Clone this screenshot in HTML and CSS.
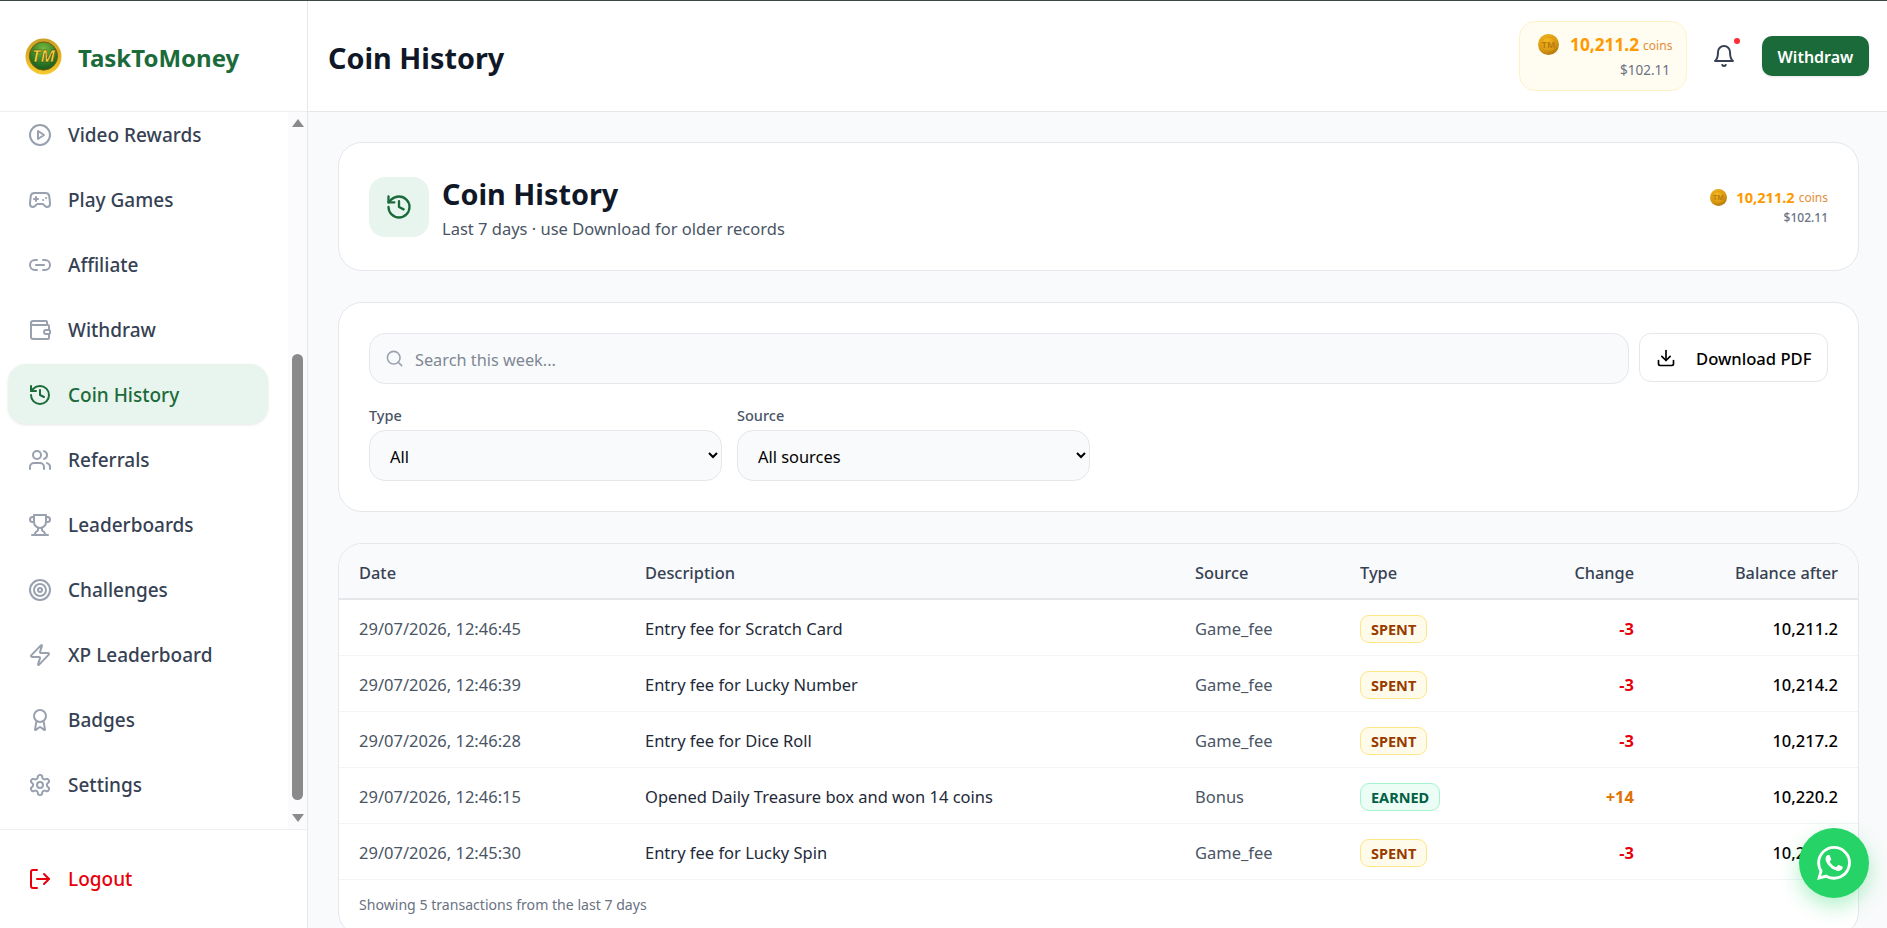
FILE: index.html
```html
<!DOCTYPE html>
<html lang="en">
<head>
    <meta charset="UTF-8">
    <meta name="viewport" content="width=device-width, initial-scale=1.0">
    <title>TaskToMoney - Coin History</title>
    <link rel="stylesheet" href="styles.css">
</head>
<body>
    <svg class="defs" width="0" height="0">
        <defs>
            <radialGradient id="coinFill" cx="40%" cy="30%" r="75%">
                <stop offset="0" stop-color="#f5b81f"/>
                <stop offset="0.65" stop-color="#dc9a12"/>
                <stop offset="1" stop-color="#a9700c"/>
            </radialGradient>
            <linearGradient id="logoRing" x1="0" y1="0" x2="0" y2="1">
                <stop offset="0" stop-color="#c9a227"/>
                <stop offset="0.45" stop-color="#e0ae1f"/>
                <stop offset="1" stop-color="#f5cb2e"/>
            </linearGradient>
            <radialGradient id="logoCore" cx="50%" cy="25%" r="80%">
                <stop offset="0" stop-color="#78ba3e"/>
                <stop offset="0.6" stop-color="#2f7d28"/>
                <stop offset="1" stop-color="#14501c"/>
            </radialGradient>
            <symbol id="coin" viewBox="0 0 24 24">
                <circle cx="12" cy="12" r="12" fill="url(#coinFill)"/>
                <circle cx="12" cy="12" r="8.5" fill="none" stroke="#b77c0e" stroke-width="0.7" opacity="0.5"/>
                <text x="12" y="15.5" text-anchor="middle" font-family="Noto Sans, sans-serif" font-size="10" font-weight="700" fill="#b77c0e">TM</text>
            </symbol>
            <symbol id="history" viewBox="0 0 24 24">
                <path d="M3 12a9 9 0 1 0 9-9 9.75 9.75 0 0 0-6.74 2.74L3 8"/>
                <path d="M3 3v5h5"/>
                <path d="M12 7v5l4 2"/>
            </symbol>
        </defs>
    </svg>

    <div class="app">
        <aside class="sidebar">
            <div class="brand">
                <svg class="brand-logo" viewBox="0 0 38 38">
                    <circle cx="19" cy="19" r="18.5" fill="url(#logoRing)"/>
                    <circle cx="19" cy="18.5" r="14.5" fill="url(#logoCore)" stroke="#7a5a10" stroke-width="1"/>
                    <text x="19" y="24.5" text-anchor="middle" font-family="Noto Sans, sans-serif" font-size="17" font-weight="700" font-style="italic" fill="#f6d13a" stroke="#3a2c05" stroke-width="0.4">TM</text>
                </svg>
                <span class="brand-name">TaskToMoney</span>
            </div>

            <div class="nav-wrap">
                <nav class="nav">
                    <a class="nav-item" href="#">
                        <svg class="icon" viewBox="0 0 24 24"><circle cx="12" cy="12" r="10"/><polygon points="10 8 16 12 10 16 10 8"/></svg>
                        Video Rewards
                    </a>
                    <a class="nav-item" href="#">
                        <svg class="icon" viewBox="0 0 24 24"><line x1="6" x2="10" y1="11" y2="11"/><line x1="8" x2="8" y1="9" y2="13"/><line x1="15" x2="15.01" y1="12" y2="12"/><line x1="18" x2="18.01" y1="10" y2="10"/><path d="M17.32 5H6.68a4 4 0 0 0-3.978 3.59c-.006.052-.01.101-.017.152C2.604 9.416 2 14.456 2 16a3 3 0 0 0 3 3c1 0 1.5-.5 2-1l1.414-1.414A2 2 0 0 1 9.828 16h4.344a2 2 0 0 1 1.414.586L17 18c.5.5 1 1 2 1a3 3 0 0 0 3-3c0-1.545-.604-6.584-.685-7.258-.007-.05-.011-.1-.017-.151A4 4 0 0 0 17.32 5z"/></svg>
                        Play Games
                    </a>
                    <a class="nav-item" href="#">
                        <svg class="icon" viewBox="0 0 24 24"><path d="M9 17H7A5 5 0 0 1 7 7h2"/><path d="M15 7h2a5 5 0 1 1 0 10h-2"/><line x1="8" x2="16" y1="12" y2="12"/></svg>
                        Affiliate
                    </a>
                    <a class="nav-item" href="#">
                        <svg class="icon" viewBox="0 0 24 24"><path d="M19 7V4a1 1 0 0 0-1-1H5a2 2 0 0 0 0 4h15a1 1 0 0 1 1 1v4h-3a2 2 0 0 0 0 4h3a1 1 0 0 0 1-1v-2a1 1 0 0 0-1-1"/><path d="M3 5v14a2 2 0 0 0 2 2h15a1 1 0 0 0 1-1v-4"/></svg>
                        Withdraw
                    </a>
                    <a class="nav-item active" href="#">
                        <svg class="icon" viewBox="0 0 24 24"><use href="#history"/></svg>
                        Coin History
                    </a>
                    <a class="nav-item" href="#">
                        <svg class="icon" viewBox="0 0 24 24"><path d="M16 21v-2a4 4 0 0 0-4-4H6a4 4 0 0 0-4 4v2"/><circle cx="9" cy="7" r="4"/><path d="M22 21v-2a4 4 0 0 0-3-3.87"/><path d="M16 3.13a4 4 0 0 1 0 7.75"/></svg>
                        Referrals
                    </a>
                    <a class="nav-item" href="#">
                        <svg class="icon" viewBox="0 0 24 24"><path d="M6 9H4.5a2.5 2.5 0 0 1 0-5H6"/><path d="M18 9h1.5a2.5 2.5 0 0 0 0-5H18"/><path d="M4 22h16"/><path d="M10 14.66V17c0 .55-.47.98-.97 1.21C7.85 18.75 7 20.24 7 22"/><path d="M14 14.66V17c0 .55.47.98.97 1.21C16.15 18.75 17 20.24 17 22"/><path d="M18 2H6v7a6 6 0 0 0 12 0V2Z"/></svg>
                        Leaderboards
                    </a>
                    <a class="nav-item" href="#">
                        <svg class="icon" viewBox="0 0 24 24"><circle cx="12" cy="12" r="10"/><circle cx="12" cy="12" r="6"/><circle cx="12" cy="12" r="2"/></svg>
                        Challenges
                    </a>
                    <a class="nav-item" href="#">
                        <svg class="icon" viewBox="0 0 24 24"><path d="M4 14a1 1 0 0 1-.78-1.63l9.9-10.2a.5.5 0 0 1 .86.46l-1.92 6.02A1 1 0 0 0 13 10h7a1 1 0 0 1 .78 1.63l-9.9 10.2a.5.5 0 0 1-.86-.46l1.92-6.02A1 1 0 0 0 11 14z"/></svg>
                        XP Leaderboard
                    </a>
                    <a class="nav-item" href="#">
                        <svg class="icon" viewBox="0 0 24 24"><path d="m15.477 12.89 1.515 8.526a.5.5 0 0 1-.81.47l-3.58-2.687a1 1 0 0 0-1.197 0l-3.586 2.686a.5.5 0 0 1-.81-.469l1.514-8.526"/><circle cx="12" cy="8" r="6"/></svg>
                        Badges
                    </a>
                    <a class="nav-item" href="#">
                        <svg class="icon" viewBox="0 0 24 24"><path d="M12.22 2h-.44a2 2 0 0 0-2 2v.18a2 2 0 0 1-1 1.73l-.43.25a2 2 0 0 1-2 0l-.15-.08a2 2 0 0 0-2.73.73l-.22.38a2 2 0 0 0 .73 2.73l.15.1a2 2 0 0 1 1 1.72v.51a2 2 0 0 1-1 1.74l-.15.09a2 2 0 0 0-.73 2.73l.22.38a2 2 0 0 0 2.73.73l.15-.08a2 2 0 0 1 2 0l.43.25a2 2 0 0 1 1 1.73V20a2 2 0 0 0 2 2h.44a2 2 0 0 0 2-2v-.18a2 2 0 0 1 1-1.73l.43-.25a2 2 0 0 1 2 0l.15.08a2 2 0 0 0 2.73-.73l.22-.39a2 2 0 0 0-.73-2.73l-.15-.08a2 2 0 0 1-1-1.74v-.5a2 2 0 0 1 1-1.74l.15-.09a2 2 0 0 0 .73-2.73l-.22-.38a2 2 0 0 0-2.73-.73l-.15.08a2 2 0 0 1-2 0l-.43-.25a2 2 0 0 1-1-1.73V4a2 2 0 0 0-2-2z"/><circle cx="12" cy="12" r="3"/></svg>
                        Settings
                    </a>
                </nav>
                <div class="scrollbar">
                    <span class="scroll-up"></span>
                    <span class="scroll-thumb"></span>
                    <span class="scroll-down"></span>
                </div>
            </div>

            <div class="sidebar-foot">
                <a class="nav-item logout" href="#">
                    <svg class="icon" viewBox="0 0 24 24"><path d="M9 21H5a2 2 0 0 1-2-2V5a2 2 0 0 1 2-2h4"/><path d="m16 17 5-5-5-5"/><path d="M21 12H9"/></svg>
                    Logout
                </a>
            </div>
        </aside>

        <div class="main">
            <header class="topbar">
                <h1 class="topbar-title">Coin History</h1>
                <div class="topbar-right">
                    <div class="balance-pill">
                        <div class="balance-line">
                            <svg class="coin"><use href="#coin"/></svg>
                            <span class="balance-num">10,211.2</span>
                            <span class="balance-unit">coins</span>
                        </div>
                        <div class="balance-usd">$102.11</div>
                    </div>
                    <button class="bell" type="button">
                        <svg class="bell-icon" viewBox="0 0 24 24"><path d="M6 8a6 6 0 0 1 12 0c0 7 3 9 3 9H3s3-2 3-9"/><path d="M10.3 21a1.94 1.94 0 0 0 3.4 0"/></svg>
                        <span class="bell-dot"></span>
                    </button>
                    <button class="withdraw-btn" type="button">Withdraw</button>
                </div>
            </header>

            <main class="content">
                <section class="card page-head">
                    <div class="page-head-left">
                        <div class="page-icon">
                            <svg class="icon" viewBox="0 0 24 24"><use href="#history"/></svg>
                        </div>
                        <div>
                            <h2 class="page-title">Coin History</h2>
                            <p class="page-sub">Last 7 days · use Download for older records</p>
                        </div>
                    </div>
                    <div class="page-balance">
                        <div class="page-balance-line">
                            <svg class="coin coin-small"><use href="#coin"/></svg>
                            <span class="page-num">10,211.2</span>
                            <span class="page-unit">coins</span>
                        </div>
                        <div class="page-usd">$102.11</div>
                    </div>
                </section>

                <section class="card filters">
                    <div class="search-row">
                        <div class="search-box">
                            <svg class="search-icon" viewBox="0 0 24 24"><circle cx="11" cy="11" r="8"/><path d="m21 21-4.3-4.3"/></svg>
                            <input class="search-input" type="text" placeholder="Search this week...">
                        </div>
                        <button class="download-btn" type="button">
                            <svg class="download-icon" viewBox="0 0 24 24"><path d="M21 15v4a2 2 0 0 1-2 2H5a2 2 0 0 1-2-2v-4"/><polyline points="7 10 12 15 17 10"/><line x1="12" x2="12" y1="15" y2="3"/></svg>
                            Download PDF
                        </button>
                    </div>
                    <div class="select-row">
                        <div class="select-group">
                            <label for="type">Type</label>
                            <select id="type"><option>All</option><option>Earned</option><option>Spent</option></select>
                        </div>
                        <div class="select-group">
                            <label for="source">Source</label>
                            <select id="source"><option>All sources</option><option>Game_fee</option><option>Bonus</option></select>
                        </div>
                    </div>
                </section>

                <section class="card table-card">
                    <table class="history-table">
                        <colgroup>
                            <col class="col-date">
                            <col class="col-desc">
                            <col class="col-source">
                            <col class="col-type">
                            <col class="col-change">
                            <col class="col-balance">
                        </colgroup>
                        <thead>
                            <tr>
                                <th>Date</th>
                                <th>Description</th>
                                <th>Source</th>
                                <th>Type</th>
                                <th class="num">Change</th>
                                <th class="num">Balance after</th>
                            </tr>
                        </thead>
                        <tbody>
                            <tr>
                                <td class="muted">29/07/2026, 12:46:45</td>
                                <td>Entry fee for Scratch Card</td>
                                <td class="muted">Game_fee</td>
                                <td><span class="badge spent">SPENT</span></td>
                                <td class="num minus">-3</td>
                                <td class="num balance">10,211.2</td>
                            </tr>
                            <tr>
                                <td class="muted">29/07/2026, 12:46:39</td>
                                <td>Entry fee for Lucky Number</td>
                                <td class="muted">Game_fee</td>
                                <td><span class="badge spent">SPENT</span></td>
                                <td class="num minus">-3</td>
                                <td class="num balance">10,214.2</td>
                            </tr>
                            <tr>
                                <td class="muted">29/07/2026, 12:46:28</td>
                                <td>Entry fee for Dice Roll</td>
                                <td class="muted">Game_fee</td>
                                <td><span class="badge spent">SPENT</span></td>
                                <td class="num minus">-3</td>
                                <td class="num balance">10,217.2</td>
                            </tr>
                            <tr>
                                <td class="muted">29/07/2026, 12:46:15</td>
                                <td>Opened Daily Treasure box and won 14 coins</td>
                                <td class="muted">Bonus</td>
                                <td><span class="badge earned">EARNED</span></td>
                                <td class="num plus">+14</td>
                                <td class="num balance">10,220.2</td>
                            </tr>
                            <tr>
                                <td class="muted">29/07/2026, 12:45:30</td>
                                <td>Entry fee for Lucky Spin</td>
                                <td class="muted">Game_fee</td>
                                <td><span class="badge spent">SPENT</span></td>
                                <td class="num minus">-3</td>
                                <td class="num balance">10,206.2</td>
                            </tr>
                        </tbody>
                    </table>
                    <div class="table-foot">Showing 5 transactions from the last 7 days</div>
                </section>
            </main>
        </div>
    </div>

    <a class="whatsapp" href="#" aria-label="WhatsApp">
        <svg viewBox="0 0 24 24"><path d="M17.472 14.382c-.297-.149-1.758-.867-2.03-.967-.273-.099-.471-.148-.67.15-.197.297-.767.966-.94 1.164-.173.199-.347.223-.644.075-.297-.15-1.255-.463-2.39-1.475-.883-.788-1.48-1.761-1.653-2.059-.173-.297-.018-.458.13-.606.134-.133.298-.347.446-.52.149-.174.198-.298.298-.497.099-.198.05-.371-.025-.52-.075-.149-.669-1.612-.916-2.207-.242-.579-.487-.5-.669-.51-.173-.008-.371-.01-.57-.01-.198 0-.52.074-.792.372-.272.297-1.04 1.016-1.04 2.479 0 1.462 1.065 2.875 1.213 3.074.149.198 2.096 3.2 5.077 4.487.709.306 1.262.489 1.694.625.712.227 1.36.195 1.871.118.571-.085 1.758-.719 2.006-1.413.248-.694.248-1.289.173-1.413-.074-.124-.272-.198-.57-.347m-5.421 7.403h-.004a9.87 9.87 0 01-5.031-1.378l-.361-.214-3.741.982.998-3.648-.235-.374a9.86 9.86 0 01-1.51-5.26c.001-5.45 4.436-9.884 9.888-9.884 2.64 0 5.122 1.03 6.988 2.898a9.825 9.825 0 012.893 6.994c-.003 5.45-4.437 9.884-9.885 9.884m8.413-18.297A11.815 11.815 0 0012.05 0C5.495 0 .16 5.335.157 11.892c0 2.096.547 4.142 1.588 5.945L.057 24l6.305-1.654a11.882 11.882 0 005.683 1.448h.005c6.554 0 11.89-5.335 11.893-11.893a11.821 11.821 0 00-3.48-8.413z"/></svg>
    </a>
</body>
</html>
```
FILE: styles.css
```css
* {
    box-sizing: border-box;
}

html, body {
    height: 100%;
}

body {
    margin: 0;
    font-family: "Noto Sans", sans-serif;
    font-size: 16px;
    color: #111827;
    background-color: #f9fafb;
    border-top: 1px solid #3c4a45;
    overflow: hidden;
}

.defs {
    display: block;
    height: 0;
}

.app {
    display: flex;
    height: 927px;
}

/* Sidebar */
.sidebar {
    width: 308px;
    flex-shrink: 0;
    display: flex;
    flex-direction: column;
    background-color: white;
    border-right: 1px solid #e5e7eb;
}

.brand {
    height: 111px;
    flex-shrink: 0;
    display: flex;
    align-items: center;
    gap: 16px;
    padding-left: 25px;
    border-bottom: 1px solid #eceef1;
}

.brand-logo {
    width: 37px;
    height: 37px;
}

.brand-name {
    padding-top: 2px;
    font-size: 24px;
    font-weight: 700;
    color: #1b6b3a;
}

.nav-wrap {
    flex: 1;
    display: flex;
    min-height: 0;
}

.nav {
    flex: 1;
    display: flex;
    flex-direction: column;
    gap: 5px;
    padding: 0 20px 0 8px;
    overflow: hidden;
}

.nav-item {
    height: 60px;
    flex-shrink: 0;
    display: flex;
    align-items: center;
    gap: 16px;
    padding: 2px 0 0 20px;
    border-radius: 18px;
    font-size: 19px;
    font-weight: 500;
    color: #364153;
    text-decoration: none;
}

.nav-item:first-child {
    margin-top: -8px;
}

.nav-item.active {
    background-color: #e8f5ee;
    color: #1b6b3a;
    box-shadow: 0 1px 3px rgba(0, 0, 0, 0.1);
}

.icon {
    width: 24px;
    height: 24px;
    flex-shrink: 0;
    fill: none;
    stroke: #99a1af;
    stroke-width: 2;
    stroke-linecap: round;
    stroke-linejoin: round;
}

.active .icon {
    stroke: #1b6b3a;
}

.scrollbar {
    width: 19px;
    flex-shrink: 0;
    display: flex;
    flex-direction: column;
    align-items: center;
    background-color: #fbfbfd;
}

.scroll-up, .scroll-down {
    width: 0;
    height: 0;
    border-left: 6px solid transparent;
    border-right: 6px solid transparent;
}

.scroll-up {
    margin-top: 7px;
    border-bottom: 8px solid #8a8a8a;
}

.scroll-down {
    margin-top: 14px;
    border-top: 8px solid #8a8a8a;
}

.scroll-thumb {
    width: 11px;
    height: 446px;
    margin-top: 227px;
    background-color: #8a8a8a;
    border-radius: 6px;
}

.sidebar-foot {
    height: 99px;
    flex-shrink: 0;
    display: flex;
    align-items: center;
    padding: 6px 8px 0;
    border-top: 1px solid #eceef1;
}

.sidebar-foot .nav-item {
    width: 260px;
}

.logout {
    color: #e7000b;
}

.logout .icon {
    stroke: #e7000b;
}

/* Top bar */
.main {
    flex: 1;
    min-width: 0;
    display: flex;
    flex-direction: column;
}

.topbar {
    height: 111px;
    flex-shrink: 0;
    display: flex;
    align-items: center;
    justify-content: space-between;
    padding: 0 18px 0 20px;
    background-color: white;
    border-bottom: 1px solid #e5e7eb;
}

.topbar-title {
    margin: 0;
    padding-top: 2px;
    font-size: 28.8px;
    font-weight: 700;
    color: #101828;
}

.topbar-right {
    display: flex;
    align-items: center;
}

.balance-pill {
    width: 168px;
    height: 70px;
    padding: 11px 16px 0 18px;
    background-color: #fffcf2;
    border: 1px solid #fef3c6;
    border-radius: 16px;
}

.balance-line {
    display: flex;
    align-items: center;
}

.coin {
    width: 21px;
    height: 21px;
    flex-shrink: 0;
}

.balance-num {
    margin-left: 11px;
    font-size: 17.3px;
    font-weight: 700;
    color: #fe9a00;
}

.balance-unit {
    margin-left: 4px;
    padding-top: 2px;
    font-size: 12px;
    color: #e17100;
    opacity: 0.8;
}

.balance-usd {
    margin-top: 5px;
    text-align: right;
    font-size: 13.5px;
    color: #6a7282;
}

.bell {
    position: relative;
    width: 34px;
    height: 40px;
    margin: 0 21px 0 20px;
    padding: 0;
    background: none;
    border: none;
}

.bell-icon {
    display: block;
    width: 24px;
    height: 24px;
    margin: 0 auto;
    fill: none;
    stroke: #364153;
    stroke-width: 2;
    stroke-linecap: round;
    stroke-linejoin: round;
}

.bell-dot {
    position: absolute;
    top: 2px;
    right: 1px;
    width: 6px;
    height: 6px;
    background-color: #fb2c36;
    border-radius: 50%;
}

.withdraw-btn {
    width: 107px;
    height: 40px;
    padding: 1px 0 0;
    background-color: #1b6b3a;
    color: white;
    border: none;
    border-radius: 10px;
    font-family: inherit;
    font-size: 16px;
    font-weight: 600;
    box-shadow: 0 1px 3px rgba(0, 0, 0, 0.1);
}

/* Content */
.content {
    flex: 1;
    min-height: 0;
    display: flex;
    flex-direction: column;
    gap: 31px;
    padding: 30px 28px 0 30px;
    overflow: hidden;
}

.card {
    flex-shrink: 0;
    background-color: white;
    border: 1px solid #e5e7eb;
    border-radius: 24px;
}

.page-head {
    height: 129px;
    display: flex;
    align-items: center;
    justify-content: space-between;
    padding: 0 30px;
}

.page-head-left {
    display: flex;
    align-items: center;
    gap: 13px;
}

.page-icon {
    width: 60px;
    height: 60px;
    display: flex;
    align-items: center;
    justify-content: center;
    background-color: #e8f5ee;
    border-radius: 16px;
}

.page-icon .icon {
    width: 28px;
    height: 28px;
    stroke: #1b6b3a;
}

.page-title {
    margin: 0;
    font-size: 28.8px;
    line-height: 36px;
    font-weight: 700;
    color: #101828;
}

.page-sub {
    margin: 5px 0 -3px;
    font-size: 16.5px;
    line-height: 24px;
    color: #4a5565;
}

.page-balance {
    text-align: right;
}

.page-balance-line {
    display: flex;
    align-items: center;
    justify-content: flex-end;
}

.coin-small {
    width: 17px;
    height: 17px;
}

.page-num {
    margin-left: 9px;
    font-size: 14.6px;
    font-weight: 700;
    color: #fe9a00;
}

.page-unit {
    margin-left: 4px;
    padding-top: 1px;
    font-size: 12px;
    color: #e17100;
    opacity: 0.8;
}

.page-usd {
    margin-top: 2px;
    font-size: 12px;
    font-weight: 500;
    color: #6a7282;
}

.filters {
    height: 210px;
    padding: 30px;
}

.search-row {
    display: flex;
    gap: 10px;
}

.search-box {
    position: relative;
    flex: 1;
}

.search-icon {
    position: absolute;
    left: 16px;
    top: 16px;
    width: 19px;
    height: 19px;
    fill: none;
    stroke: #99a1af;
    stroke-width: 2;
    stroke-linecap: round;
    stroke-linejoin: round;
}

.search-input {
    width: 100%;
    height: 51px;
    padding: 2px 16px 0 45px;
    background-color: #f9fafb;
    border: 1px solid #e5e7eb;
    border-radius: 16px;
    font-family: inherit;
    font-size: 16.3px;
}

.search-input::placeholder {
    color: #7f8794;
}

.download-btn {
    width: 189px;
    height: 49px;
    display: flex;
    align-items: center;
    gap: 20px;
    padding: 1px 0 0 16px;
    background-color: white;
    border: 1px solid #e5e7eb;
    border-radius: 12px;
    font-family: inherit;
    font-size: 16.6px;
    font-weight: 500;
    color: black;
}

.download-icon {
    width: 20px;
    height: 20px;
    fill: none;
    stroke: black;
    stroke-width: 2;
    stroke-linecap: round;
    stroke-linejoin: round;
}

.select-row {
    display: flex;
    gap: 15px;
    margin-top: 20px;
}

.select-group {
    width: 353px;
}

.select-group label {
    display: block;
    margin-bottom: 4px;
    font-size: 14.5px;
    line-height: 22px;
    font-weight: 500;
    color: #4a5565;
}

.select-group select {
    width: 100%;
    height: 51px;
    padding: 1px 16px 0;
    background-color: #f9fafb;
    border: 1px solid #e5e7eb;
    border-radius: 16px;
    font-family: inherit;
    font-size: 16.4px;
    color: black;
}

/* Table */
.table-card {
    overflow: hidden;
}

.history-table {
    width: 100%;
    border-collapse: collapse;
    table-layout: fixed;
}

.col-date { width: 286px; }
.col-desc { width: 550px; }
.col-source { width: 165px; }
.col-type { width: 180px; }
.col-change { width: 134px; }
.col-balance { width: auto; }

.history-table th {
    height: 55px;
    padding: 3px 20px 0;
    background-color: #f9fafb;
    border-bottom: 2px solid #e5e7eb;
    text-align: left;
    font-size: 16.4px;
    font-weight: 500;
    color: #364153;
}

.history-table td {
    height: 56px;
    padding: 2px 20px 0;
    border-bottom: 1px solid #f3f4f6;
    font-size: 16.5px;
    color: #1e2939;
}

.history-table .num {
    text-align: right;
}

.history-table th.num {
    font-size: 16.3px;
}

.history-table .muted {
    color: #4a5565;
}

.history-table .minus {
    font-weight: 700;
    color: #e7000b;
}

.history-table .plus {
    font-weight: 700;
    color: #e17100;
}

.history-table .balance {
    font-weight: 500;
    color: black;
}

.badge {
    display: inline-block;
    margin-top: 1px;
    padding: 0 10px;
    line-height: 26px;
    border: 1px solid;
    border-radius: 9px;
    font-size: 14.5px;
    font-weight: 700;
    vertical-align: middle;
}

.badge.spent {
    background-color: #fffbeb;
    border-color: #fee685;
    color: #973c00;
}

.badge.earned {
    background-color: #ecfdf5;
    border-color: #a4f4cf;
    color: #006045;
}

.table-foot {
    padding: 15px 20px 20px;
    font-size: 14.1px;
    line-height: 20px;
    color: #6a7282;
}

.whatsapp {
    position: fixed;
    right: 18px;
    bottom: 30px;
    width: 70px;
    height: 70px;
    display: flex;
    align-items: center;
    justify-content: center;
    background-color: #25d366;
    border-radius: 50%;
    box-shadow: 0 8px 20px rgba(37, 211, 102, 0.35);
}

.whatsapp svg {
    width: 34px;
    height: 34px;
    fill: white;
}
```
